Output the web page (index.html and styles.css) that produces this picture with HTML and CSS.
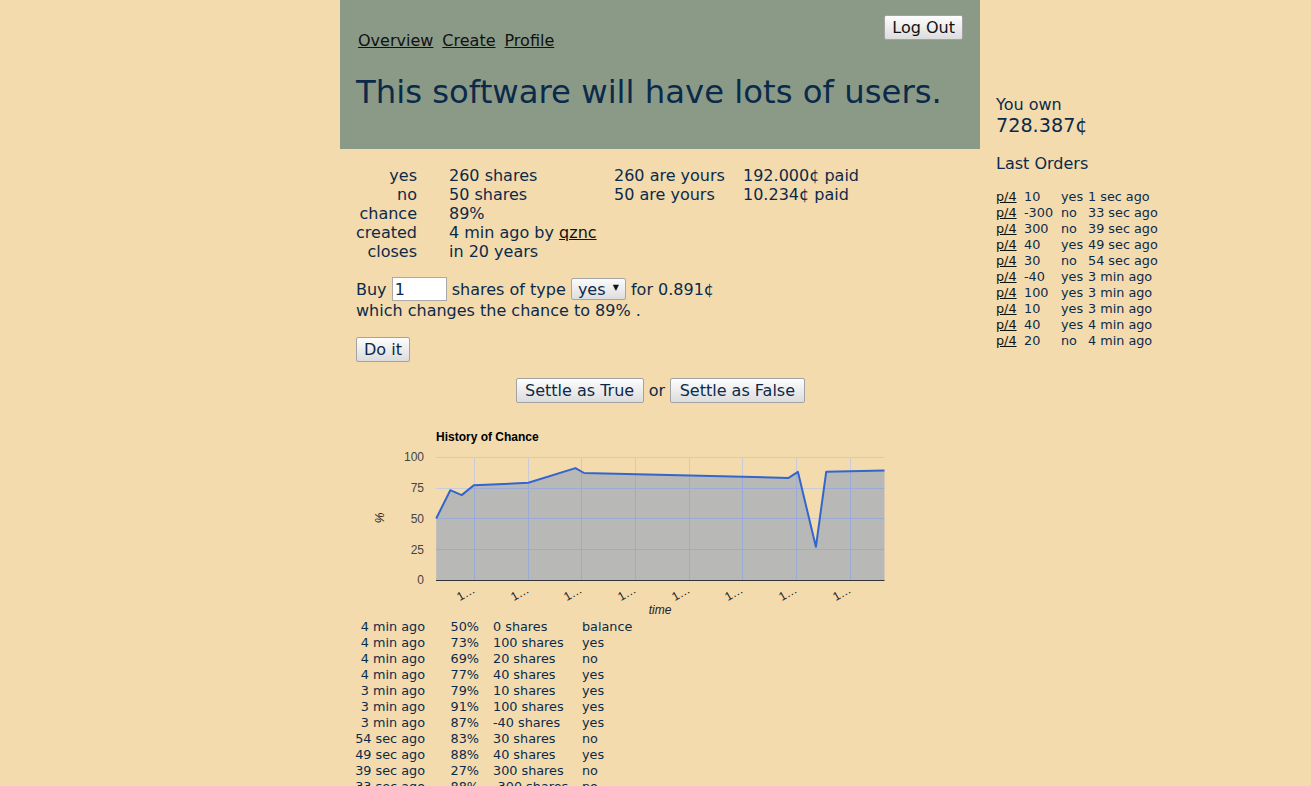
FILE: index.html
```html
<!DOCTYPE html>
<html lang="en">
<head>
<meta charset="utf-8">
<title>This software will have lots of users.</title>
<link rel="stylesheet" href="styles.css">
</head>
<body>
<div class="page">
  <main class="main">
    <header class="header">
      <div class="topbar">
        <nav class="nav">
          <a href="#">Overview</a>
          <a href="#">Create</a>
          <a href="#">Profile</a>
        </nav>
        <button class="btn logout">Log Out</button>
      </div>
      <h1 class="title">This software will have lots of users.</h1>
    </header>

    <div class="content">
      <div class="info">
        <div class="lbl">yes</div><div>260 shares</div><div>260 are yours</div><div>192.000¢ paid</div>
        <div class="lbl">no</div><div>50 shares</div><div>50 are yours</div><div>10.234¢ paid</div>
        <div class="lbl">chance</div><div>89%</div><div></div><div></div>
        <div class="lbl">created</div><div>4 min ago by <a href="#">qznc</a></div><div></div><div></div>
        <div class="lbl">closes</div><div>in 20 years</div><div></div><div></div>
      </div>

      <form class="buy">
        <p class="buy-line">Buy <input class="amount" type="text" value="1"> shares of type <span class="select-wrap"><select class="type"><option>yes</option><option>no</option></select></span> for 0.891¢<br>which changes the chance to 89% .</p>
        <p class="do"><button class="btn" type="button">Do it</button></p>
      </form>

      <p class="settle"><button class="btn wide">Settle as True</button> or <button class="btn wide">Settle as False</button></p>

      <svg class="chart" width="608" height="198" viewBox="0 0 608 198">
        <text x="80" y="19.5" class="c-title">History of Chance</text>
        <g class="grid">
          <line x1="80" y1="36.5" x2="528.5" y2="36.5"/>
          <line x1="80" y1="67.5" x2="528.5" y2="67.5"/>
          <line x1="80" y1="97.5" x2="528.5" y2="97.5"/>
          <line x1="80" y1="128.5" x2="528.5" y2="128.5"/>
          <line x1="118.5" y1="36" x2="118.5" y2="159"/>
          <line x1="172.5" y1="36" x2="172.5" y2="159"/>
          <line x1="225.5" y1="36" x2="225.5" y2="159"/>
          <line x1="279.5" y1="36" x2="279.5" y2="159"/>
          <line x1="333.5" y1="36" x2="333.5" y2="159"/>
          <line x1="386.5" y1="36" x2="386.5" y2="159"/>
          <line x1="440.5" y1="36" x2="440.5" y2="159"/>
          <line x1="494.5" y1="36" x2="494.5" y2="159"/>
        </g>
        <path class="area" d="M80.2 97.5 L94.3 69.2 L105.7 74.1 L117.8 64.3 L172.3 61.8 L219.5 47.1 L228.1 52 L432.6 56.9 L441.9 50.8 L459.9 125.8 L470.2 50.8 L528.5 49.5 L528.5 159 L80.2 159 Z"/>
        <path class="series" d="M80.2 97.5 L94.3 69.2 L105.7 74.1 L117.8 64.3 L172.3 61.8 L219.5 47.1 L228.1 52 L432.6 56.9 L441.9 50.8 L459.9 125.8 L470.2 50.8 L528.5 49.5"/>
        <line class="axis" x1="80" y1="159.5" x2="528.5" y2="159.5"/>
        <g class="ylab">
          <text x="68" y="40">100</text>
          <text x="68" y="71">75</text>
          <text x="68" y="102">50</text>
          <text x="68" y="132.5">25</text>
          <text x="68" y="163">0</text>
        </g>
        <text class="atitle" transform="translate(28 97) rotate(-90)">%</text>
        <g class="xlab">
          <text transform="translate(120 171) rotate(-30)">1…</text>
          <text transform="translate(174 171) rotate(-30)">1…</text>
          <text transform="translate(227 171) rotate(-30)">1…</text>
          <text transform="translate(281 171) rotate(-30)">1…</text>
          <text transform="translate(335 171) rotate(-30)">1…</text>
          <text transform="translate(388 171) rotate(-30)">1…</text>
          <text transform="translate(442 171) rotate(-30)">1…</text>
          <text transform="translate(496 171) rotate(-30)">1…</text>
        </g>
        <text class="atitle xt" x="304" y="193">time</text>
      </svg>

      <div class="history">
        <div class="r">4 min ago</div><div class="r">50%</div><div class="p">0 shares</div><div>balance</div>
        <div class="r">4 min ago</div><div class="r">73%</div><div class="p">100 shares</div><div>yes</div>
        <div class="r">4 min ago</div><div class="r">69%</div><div class="p">20 shares</div><div>no</div>
        <div class="r">4 min ago</div><div class="r">77%</div><div class="p">40 shares</div><div>yes</div>
        <div class="r">3 min ago</div><div class="r">79%</div><div class="p">10 shares</div><div>yes</div>
        <div class="r">3 min ago</div><div class="r">91%</div><div class="p">100 shares</div><div>yes</div>
        <div class="r">3 min ago</div><div class="r">87%</div><div class="p">-40 shares</div><div>yes</div>
        <div class="r">54 sec ago</div><div class="r">83%</div><div class="p">30 shares</div><div>no</div>
        <div class="r">49 sec ago</div><div class="r">88%</div><div class="p">40 shares</div><div>yes</div>
        <div class="r">39 sec ago</div><div class="r">27%</div><div class="p">300 shares</div><div>no</div>
        <div class="r">33 sec ago</div><div class="r">88%</div><div class="p">-300 shares</div><div>no</div>
        <div class="r">1 sec ago</div><div class="r">89%</div><div class="p">10 shares</div><div>yes</div>
      </div>
    </div>
  </main>

  <aside class="side">
    <div class="own">You own</div>
    <div class="balance">728.387¢</div>
    <h2 class="side-h">Last Orders</h2>
    <div class="orders">
      <a href="#">p/4</a><span>10</span><span>yes</span><span>1 sec ago</span>
      <a href="#">p/4</a><span>-300</span><span>no</span><span>33 sec ago</span>
      <a href="#">p/4</a><span>300</span><span>no</span><span>39 sec ago</span>
      <a href="#">p/4</a><span>40</span><span>yes</span><span>49 sec ago</span>
      <a href="#">p/4</a><span>30</span><span>no</span><span>54 sec ago</span>
      <a href="#">p/4</a><span>-40</span><span>yes</span><span>3 min ago</span>
      <a href="#">p/4</a><span>100</span><span>yes</span><span>3 min ago</span>
      <a href="#">p/4</a><span>10</span><span>yes</span><span>3 min ago</span>
      <a href="#">p/4</a><span>40</span><span>yes</span><span>4 min ago</span>
      <a href="#">p/4</a><span>20</span><span>no</span><span>4 min ago</span>
    </div>
  </aside>
</div>
</body>
</html>
```

FILE: styles.css
```css
html, body {
  margin: 0;
  padding: 0;
  background: #f3dbae;
}

body {
  font-family: "DejaVu Sans", Verdana, sans-serif;
  font-size: 16px;
  color: #0b2a4a;
}

a {
  color: #111;
  text-decoration: underline;
}

.page {
  display: flex;
  align-items: flex-start;
  margin-left: 340px;
}

.main {
  width: 640px;
  flex: none;
}

.header {
  background: #8b9a87;
  padding: 15px 17px 38px 16px;
}

.topbar {
  display: flex;
  justify-content: space-between;
  align-items: flex-start;
}

.nav {
  display: flex;
  gap: 9px;
  padding: 16px 0 0 2px;
}

.btn {
  font-family: "DejaVu Sans", Verdana, sans-serif;
  font-size: 16px;
  color: #0b2a4a;
  background: linear-gradient(#fdfdfd, #dcdcdc);
  border: 1px solid #a3a3a3;
  border-radius: 2px;
  padding: 2px 7px;
  margin: 0;
  line-height: normal;
}

.btn.wide {
  padding: 2px 8.5px;
}

.logout {
  padding: 2px 7px 2px 7.5px;
  color: #111;
}

.title {
  font-size: 32.3px;
  font-weight: normal;
  margin: 23px 0 0 0;
  line-height: normal;
  color: #0b2a4a;
}

.content {
  padding: 0 16px;
}

.info {
  display: grid;
  grid-template-columns: 93px 165px 129px auto;
  line-height: 19px;
  margin-top: 17px;
}

.info .lbl {
  text-align: right;
  padding-right: 32px;
}

.buy {
  margin: 0;
}

.buy-line {
  margin: 16px 0 0 0;
}

.amount {
  width: 55px;
  height: 24px;
  box-sizing: border-box;
  border: 1px solid #a9a9a9;
  padding: 0 2px;
  font-family: "DejaVu Sans", Verdana, sans-serif;
  font-size: 16px;
  color: #0b2a4a;
  background: #fff;
  margin: 0;
}

.select-wrap {
  position: relative;
  display: inline-block;
}

.select-wrap::after {
  content: "▼";
  position: absolute;
  right: 7px;
  top: 5px;
  font-size: 8px;
  color: #111;
  pointer-events: none;
}

.type {
  appearance: none;
  -webkit-appearance: none;
  font-family: "DejaVu Sans", Verdana, sans-serif;
  font-size: 16px;
  color: #0b2a4a;
  height: 22px;
  padding: 0 19px 0 6px;
  border: 1px solid #a6a6a6;
  border-radius: 2px;
  background: linear-gradient(#fbfbfb, #dedede);
  margin: 0;
}

.do {
  margin: 17px 0 0 0;
}

.settle {
  text-align: center;
  margin: 16px 0 0 0;
}

.chart {
  display: block;
  margin-top: 18px;
  font-family: "Liberation Sans", Arial, sans-serif;
}

.c-title {
  font-size: 12px;
  font-weight: bold;
  fill: #000;
}

.grid line {
  stroke: #c8cbd8;
  stroke-width: 1;
}

.area {
  fill: #3366cc;
  fill-opacity: 0.3;
  stroke: none;
}

.series {
  fill: none;
  stroke: #3366cc;
  stroke-width: 2;
  stroke-linejoin: round;
}

.axis {
  stroke: #333;
  stroke-width: 1;
}

.ylab text {
  font-size: 12px;
  fill: #444;
  text-anchor: end;
}

.xlab text {
  font-size: 12px;
  fill: #222;
  text-anchor: end;
}

.atitle {
  font-size: 12px;
  font-style: italic;
  fill: #222;
  text-anchor: middle;
}

.history {
  display: grid;
  grid-template-columns: 77px 54px 103px auto;
  margin-left: -8px;
  font-size: 12.8px;
  line-height: 16px;
  white-space: nowrap;
}

.history .r {
  text-align: right;
}

.history .p {
  padding-left: 14px;
}

.side {
  margin-left: 16px;
  padding-top: 95px;
}

.own {
  line-height: normal;
}

.balance {
  font-size: 19.2px;
  line-height: normal;
}

.side-h {
  font-size: 16px;
  font-weight: normal;
  margin: 17px 0 16px 0;
  line-height: normal;
}

.orders {
  display: grid;
  grid-template-columns: 28px 37px 27px auto;
  font-size: 12.8px;
  line-height: 16px;
  white-space: nowrap;
}
```
